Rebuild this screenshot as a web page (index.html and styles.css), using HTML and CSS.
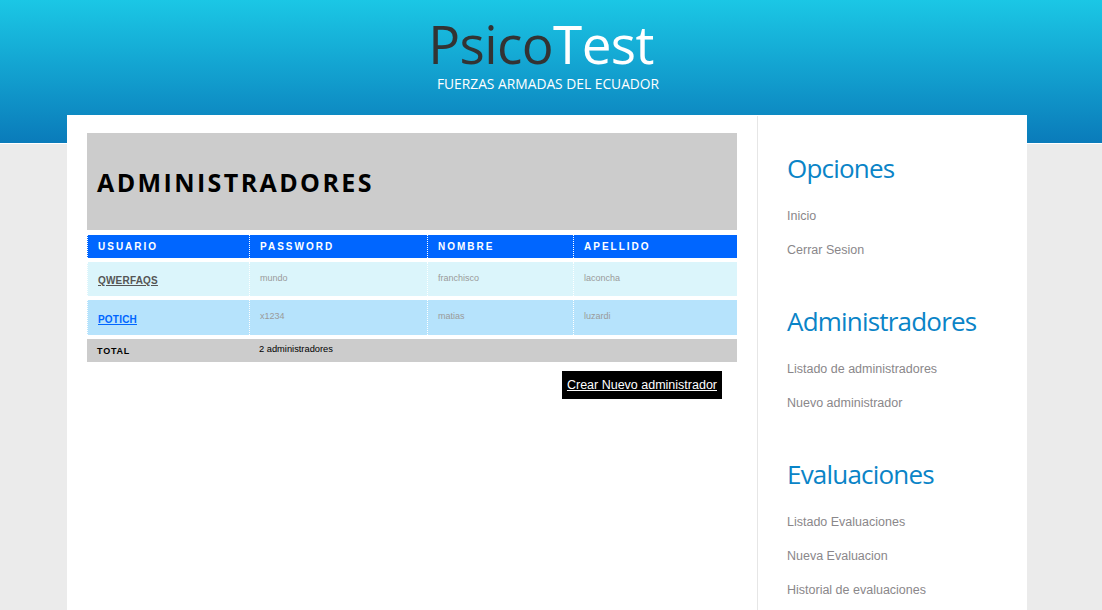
FILE: index.html
```html
<!DOCTYPE html>
<html lang="es">
<head>
<meta charset="utf-8">
<title>PsicoTest - Administradores</title>
<link rel="stylesheet" href="styles.css">
</head>
<body>
<header class="top">
  <div class="logo">
    <div class="logo-name"><span class="dark">Psico</span><span class="light">Test</span></div>
    <div class="logo-sub">FUERZAS ARMADAS DEL ECUADOR</div>
  </div>
</header>
<div class="wrap">
  <main class="content">
    <div class="title-box"><h1>ADMINISTRADORES</h1></div>
    <table class="grid">
      <colgroup>
        <col class="c1"><col class="c2"><col class="c3"><col class="c4">
      </colgroup>
      <thead>
        <tr class="head"><th>USUARIO</th><th>PASSWORD</th><th>NOMBRE</th><th>APELLIDO</th></tr>
      </thead>
      <tbody>
        <tr class="row odd"><td><a href="#" class="user">QWERFAQS</a></td><td>mundo</td><td>franchisco</td><td>laconcha</td></tr>
        <tr class="row even"><td class="low"><a href="#" class="user blue">POTICH</a></td><td>x1234</td><td>matias</td><td>luzardi</td></tr>
      </tbody>
      <tfoot>
        <tr class="total"><th>TOTAL</th><td colspan="3">2 administradores</td></tr>
      </tfoot>
    </table>
    <div class="actions"><a href="#" class="btn">Crear Nuevo administrador</a></div>
  </main>
  <aside class="side">
    <section class="group">
      <h2>Opciones</h2>
      <ul>
        <li><a href="#">Inicio</a></li>
        <li><a href="#">Cerrar Sesion</a></li>
      </ul>
    </section>
    <section class="group">
      <h2>Administradores</h2>
      <ul>
        <li><a href="#">Listado de administradores</a></li>
        <li><a href="#">Nuevo administrador</a></li>
      </ul>
    </section>
    <section class="group">
      <h2>Evaluaciones</h2>
      <ul>
        <li><a href="#">Listado Evaluaciones</a></li>
        <li><a href="#">Nueva Evaluacion</a></li>
        <li><a href="#">Historial de evaluaciones</a></li>
      </ul>
    </section>
  </aside>
</div>
</body>
</html>
```
FILE: styles.css
```css
html, body {
  margin: 0;
  padding: 0;
}
body {
  font-family: "Liberation Sans", Arial, sans-serif;
  background:
    linear-gradient(to bottom, #1bc7e5 0%, #0a7bba 100%) top left / 100% 143px no-repeat,
    linear-gradient(#ffffff, #ffffff) 0 143px / 100% 1px no-repeat,
    #ebebeb;
  overflow: hidden;
}
.top {
  height: 115px;
  display: flex;
  justify-content: center;
  margin-left: -16px;
}
.logo {
  display: flex;
  flex-direction: column;
  align-items: center;
  padding-top: 19px;
  font-family: "Open Sans", sans-serif;
}
.logo-name {
  font-size: 53px;
  line-height: 50px;
  letter-spacing: -0.6px;
  margin-left: -4px;
}
.logo-name .dark { color: #333333; }
.logo-name .light { color: #ffffff; }
.logo-sub {
  color: #ffffff;
  font-size: 13.8px;
  line-height: 18px;
  margin-top: 6px;
  margin-left: 10px;
}
.wrap {
  width: 960px;
  margin-left: calc(50% - 484px);
  background: #ffffff;
  display: flex;
  height: 495px;
}
.content {
  width: 650px;
  padding: 18px 20px 0 20px;
}
.title-box {
  background: #cccccc;
  height: 97px;
  display: flex;
  align-items: center;
  padding-left: 10px;
}
.title-box h1 {
  margin: 0;
  font-family: "Open Sans", sans-serif;
  font-weight: 700;
  font-size: 25px;
  letter-spacing: 2.4px;
  color: #000000;
  padding-top: 1px;
}
.grid {
  width: 650px;
  border-collapse: separate;
  border-spacing: 0 4.5px;
  table-layout: fixed;
  margin-top: 0.6px;
}
.c1 { width: 162px; }
.c2 { width: 178px; }
.c3 { width: 146px; }
.c4 { width: 164px; }
.grid th, .grid td {
  text-align: left;
  padding: 0 0 0 10px;
  border-left: 1px dotted #ffffff;
}
.head th {
  background: #0066ff;
  color: #ffffff;
  font-size: 10px;
  font-weight: 700;
  letter-spacing: 2px;
  height: 22px;
  padding-top: 1px;
}
.row td {
  color: #9a9a9a;
  font-size: 9px;
  vertical-align: middle;
  padding-bottom: 2px;
}
.row.odd td { background: #dbf5fb; height: 32px; }
.row.even td { background: #b6e3fc; height: 31px; }
.row td.low { padding-top: 4px; padding-bottom: 0; }
.user {
  color: #555555;
  font-size: 10px;
  font-weight: 700;
  letter-spacing: 0.2px;
  display: inline-block;
  margin-top: 5px;
}
.user.blue { color: #0066ff; margin-top: 0; }
.total th, .total td {
  background: #cccccc;
  height: 21px;
  border-left: none;
  color: #000000;
  font-size: 9.3px;
}
.total th {
  font-size: 9px;
  font-weight: 700;
  letter-spacing: 0.8px;
  padding-top: 1px;
}
.total td {
  padding-left: 10px;
  padding-bottom: 2px;
}
.actions {
  display: flex;
  justify-content: flex-end;
  padding-right: 15px;
  margin-top: 5px;
}
.btn {
  background: #000000;
  color: #ffffff;
  font-size: 12.5px;
  line-height: 28px;
  padding: 0 5px;
  height: 28px;
}
.side {
  width: 239px;
  border-left: 1px solid #e6e6e6;
  padding: 34px 0 0 29px;
  margin-top: 1px;
}
.group {
  margin-bottom: 26px;
}
.group:last-child {
  margin-bottom: 0;
}
.side h2 {
  margin: 0 0 23px 0;
  font-family: "Open Sans", sans-serif;
  font-weight: 400;
  font-size: 26px;
  letter-spacing: -0.8px;
  line-height: 36px;
  color: #0a84c7;
}
.side ul {
  list-style: none;
  margin: 0;
  padding: 0;
}
.side li {
  height: 34px;
  font-size: 12.5px;
  line-height: 14px;
}
.side li a {
  color: #8a878a;
  text-decoration: none;
}
```
